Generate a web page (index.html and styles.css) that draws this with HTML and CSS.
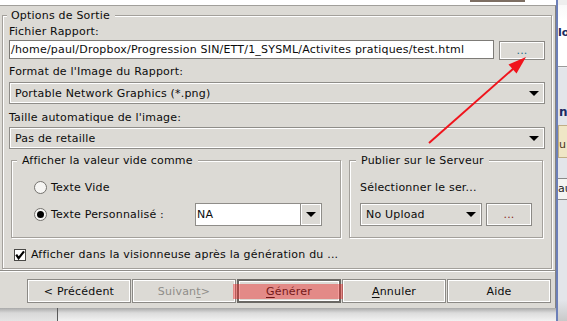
FILE: index.html
```html
<!DOCTYPE html>
<html lang="fr">
<head>
<meta charset="utf-8">
<title>Options de Sortie</title>
<link rel="stylesheet" href="styles.css">
</head>
<body>
<div class="stage">
  <div class="backwin">
    <div class="bw-top"></div>
    <span class="bw-lo">lo</span>
    <div class="bw-sep"></div>
    <span class="bw-n">n</span>
    <div class="bw-note"><span>u</span></div>
    <div class="bw-tab"><span>au</span></div>
  </div>
  <div class="topstrip"><div class="ts-bar"></div></div>
  <div class="dialog">
    <div class="panel">
      <div class="group main">
        <span class="gtitle">Options de Sortie</span>
        <div class="label">Fichier Rapport:</div>
        <div class="filerow">
          <div class="field">/home/paul/Dropbox/Progression SIN/ETT/1_SYSML/Activites pratiques/test.html</div>
          <div class="btn dots">...</div>
        </div>
        <div class="label l2">Format de l'Image du Rapport:</div>
        <div class="combo c1"><span>Portable Network Graphics (*.png)</span><i class="tri"></i></div>
        <div class="label l3">Taille automatique de l'image:</div>
        <div class="combo c2"><span>Pas de retaille</span><i class="tri"></i></div>
        <div class="subgroups">
          <div class="group sub left">
            <span class="gtitle">Afficher la valeur vide comme</span>
            <div class="rrow">
              <span class="radio"></span><span class="rlabel">Texte Vide</span>
            </div>
            <div class="rrow r2">
              <span class="radio on"></span><span class="rlabel wide">Texte Personnalisé :</span>
              <div class="ecombo">
                <span class="etxt">NA</span>
                <span class="ebtn"><i class="tri"></i></span>
              </div>
            </div>
          </div>
          <div class="group sub right">
            <span class="gtitle">Publier sur le Serveur</span>
            <div class="stext">Sélectionner le ser...</div>
            <div class="srow">
              <div class="combo c3"><span>No Upload</span><i class="tri"></i></div>
              <div class="btn dots2">...</div>
            </div>
          </div>
        </div>
        <div class="checkrow">
          <span class="check"><svg width="10" height="10" viewBox="0 0 10 10"><path d="M1.2 4.6 L3.6 8.2 L9 1.4" fill="none" stroke="#000" stroke-width="2.2"/></svg></span>
          <span>Afficher dans la visionneuse après la génération du ...</span>
        </div>
      </div>
    </div>
    <div class="buttons">
      <div class="btn wbtn">&lt; Précédent</div>
      <div class="btn wbtn disabled">Suivan<u>t</u> &gt;</div>
      <div class="btn wbtn default"><u>G</u>énérer</div>
      <div class="btn wbtn"><u>A</u>nnuler</div>
      <div class="btn wbtn">Aide</div>
    </div>
  </div>
  <div class="below"><div class="below-left"></div><div class="below-right"></div></div>
  <div class="highlight"></div>
  <svg class="redarrow" width="567" height="321" viewBox="0 0 567 321">
    <line x1="429" y1="143" x2="514" y2="68" stroke="#f0141c" stroke-width="2"/>
    <polygon points="526,57 516.5,73.4 508.5,64.4" fill="#f0141c"/>
  </svg>
</div>
</body>
</html>
```
FILE: styles.css
```css
* { box-sizing: border-box; }
html, body { margin: 0; padding: 0; background: #fff; }
body {
  font-family: "DejaVu Sans", sans-serif;
  font-size: 11px;
  line-height: 13px;
  letter-spacing: 0.2px;
  color: #0c0c0c;
}
.stage {
  position: relative;
  width: 567px;
  height: 321px;
  overflow: hidden;
  background: #fff;
  display: flex;
  flex-direction: column;
}

/* background window on the right */
.backwin {
  position: absolute;
  left: 556px;
  top: 0;
  width: 11px;
  height: 321px;
  overflow: hidden;
  background: linear-gradient(#f7f7f7 0, #fff 20px, #fff 66px, #e3e5ea 68px, #e3e5ea 300px, #c9c9c9 321px);
  border-left: 2px solid #6c7fb8;
}
.bw-top { position: absolute; left: 0; top: 0; width: 11px; height: 5px; background: #eeeeee; }
.bw-lo { position: absolute; left: 0; top: 26px; color: #1b2a62; font-weight: bold; letter-spacing: 0; }
.bw-sep { position: absolute; left: 0; top: 66px; width: 11px; height: 1px; background: #9a9a9a; }
.bw-n { position: absolute; left: 1px; top: 106px; color: #1b2a62; font-weight: bold; font-size: 12px; }
.bw-note { position: absolute; left: 0; top: 125px; width: 11px; height: 33px; background: #efe6c6; border: 1px solid #bfae86; border-right: none; }
.bw-note span { position: absolute; left: 0; top: 12px; color: #4a3418; }
.bw-tab { position: absolute; left: 0; top: 178px; width: 11px; height: 22px; background: #f4f4f2; border-top: 1px solid #8a8a8a; border-bottom: 1px solid #8a8a8a; }
.bw-tab span { position: absolute; left: 0; top: 3px; color: #222; letter-spacing: 0; }

.topstrip { position: relative; flex: none; width: 556px; height: 5px; background: #fff; }
.ts-bar { position: absolute; left: 470px; top: 0; width: 55px; height: 2px; background: #7d6e62; }

.dialog {
  position: relative;
  flex: none;
  width: 556px;
  height: 303px;
  background: #dcdad5;
  border-top: 1px solid #a19f9b;
  border-right: 1px solid #85837f;
}
.panel {
  height: 265px;
  padding: 9px 0 1px 2px;
  border-bottom: 1px solid #8e8c88;
  box-shadow: 0 1px 0 #fff;
}
.group {
  position: relative;
  border: 1px solid #a3a09b;
  box-shadow: inset 1px 1px 0 #fff, 1px 1px 0 #fff;
}
.gtitle {
  position: absolute;
  top: -7px;
  left: 4px;
  padding: 0 5px 0 4px;
  background: #dcdad5;
  white-space: nowrap;
}
.main {
  width: 550px;
  height: 254px;
  padding: 9px 6px 0 6px;
}
.label { height: 13px; white-space: nowrap; }
.filerow { display: flex; align-items: flex-start; margin-top: 2px; height: 20px; }
.field {
  width: 485px;
  height: 19px;
  background: #fff;
  border: 1px solid #7d7b77;
  padding: 0 0 0 1px;
  display: flex;
  align-items: center;
  white-space: nowrap;
  overflow: hidden;
}
.btn {
  display: flex;
  align-items: center;
  justify-content: center;
  border: 1px solid #8b8985;
  box-shadow: inset 0 0 0 1px #fff;
  background: #dcdad5;
  white-space: nowrap;
}
.dots { width: 46px; height: 19px; margin: 1px 0 0 auto; color: #1d6f86; }
.l2 { margin-top: 5px; }
.l3 { margin-top: 7px; }
.combo {
  display: flex;
  align-items: center;
  height: 22px;
  border: 1px solid #8f8d89;
  box-shadow: inset 1px 1px 0 #fff, inset -1px -1px 0 #fff;
  padding: 0 5px 0 5px;
  white-space: nowrap;
}
.c1 { margin-top: 4px; }
.c2 { margin-top: 3px; }
.tri {
  display: block;
  margin-left: auto;
  width: 0;
  height: 0;
  border-left: 5px solid transparent;
  border-right: 5px solid transparent;
  border-top: 5px solid #000;
}
.subgroups {
  display: flex;
  gap: 8px;
  margin: 11px 2px 0 2px;
  height: 78px;
}
.sub .gtitle { left: 5px; padding: 0 5px; }
.left { width: 330px; padding: 20px 0 0 22px; }
.right { width: 194px; padding: 20px 0 0 10px; }
.right .gtitle { left: 6px; }
.rrow { display: flex; align-items: center; height: 13px; white-space: nowrap; }
.r2 { margin-top: 9px; height: 23px; }
.radio {
  flex: none;
  width: 13px;
  height: 13px;
  border-radius: 50%;
  border: 1px solid #74726e;
  background: #f6f5f3;
  display: flex;
  align-items: center;
  justify-content: center;
  margin-right: 4px;
}
.radio.on::after {
  content: "";
  width: 7px;
  height: 7px;
  border-radius: 50%;
  background: #000;
}
.rlabel.wide { width: 144px; flex: none; }
.ecombo {
  display: flex;
  width: 127px;
  height: 23px;
  border: 1px solid #8f8d89;
}
.etxt {
  flex: 1;
  background: #fff;
  border-right: 1px solid #8f8d89;
  display: flex;
  align-items: center;
  padding-left: 1px;
}
.ebtn {
  width: 20px;
  display: flex;
  align-items: center;
  justify-content: center;
  box-shadow: inset 1px 1px 0 #fff, inset -1px -1px 0 #fff;
}
.ebtn .tri { margin: 0; }
.stext { height: 13px; white-space: nowrap; }
.srow { display: flex; gap: 4px; margin-top: 9px; }
.c3 { width: 122px; height: 23px; }
.dots2 { width: 46px; height: 23px; color: #8a2a1a; }
.checkrow {
  display: flex;
  align-items: center;
  height: 13px;
  margin-top: 10px;
  white-space: nowrap;
}
.check {
  flex: none;
  width: 12px;
  height: 12px;
  margin: 0 5px 0 5px;
  border: 1px solid #4a4946;
  background: #fff;
  display: flex;
  align-items: center;
  justify-content: center;
}
.check svg { display: block; }
.buttons {
  display: flex;
  justify-content: flex-end;
  gap: 1px;
  padding: 8px 4px 0 0;
}
.wbtn { width: 104px; height: 24px; }
.disabled { color: #8f8d89; }
.default { border: 2px solid #6a6864; }
u { text-decoration-thickness: 1px; text-underline-offset: 2px; }

.below { flex: 1; width: 556px; display: flex; }
.below-left { width: 58px; background: linear-gradient(#a9a9a9, #d8d8d8 5px, #e4e4e4); border-right: 1px solid #5a5a5a; }
.below-right { flex: 1; background: linear-gradient(#a9a9a9, #dcdcdc 5px, #f2f2f2); }

.highlight {
  position: absolute;
  left: 233px;
  top: 284px;
  width: 110px;
  height: 15px;
  background: rgba(236, 40, 40, 0.45);
}
.redarrow { position: absolute; left: 0; top: 0; pointer-events: none; }
```
